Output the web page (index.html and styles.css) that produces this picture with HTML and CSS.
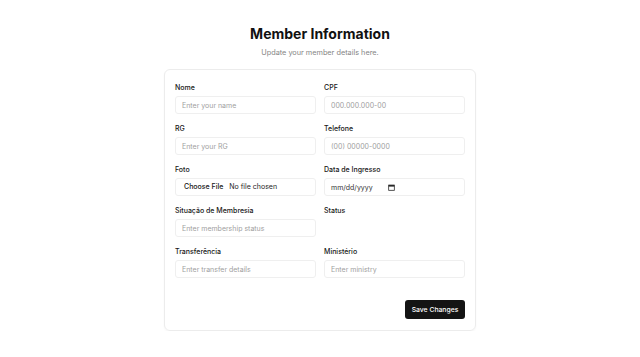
FILE: index.html
```html
<!DOCTYPE html>
<html lang="en">
<head>
<meta charset="utf-8">
<title>Member Information</title>
<link rel="stylesheet" href="styles.css">
</head>
<body>
<main class="page">
  <header class="head">
    <h1 class="title">Member Information</h1>
    <p class="subtitle">Update your member details here.</p>
  </header>
  <form class="card">
    <div class="grid">
      <div class="field">
        <label class="label">Nome</label>
        <input class="input" type="text" placeholder="Enter your name">
      </div>
      <div class="field">
        <label class="label">CPF</label>
        <input class="input" type="text" placeholder="000.000.000-00">
      </div>
      <div class="field">
        <label class="label">RG</label>
        <input class="input" type="text" placeholder="Enter your RG">
      </div>
      <div class="field">
        <label class="label">Telefone</label>
        <input class="input" type="text" placeholder="(00) 00000-0000">
      </div>
      <div class="field">
        <label class="label">Foto</label>
        <input class="input file" type="file">
      </div>
      <div class="field">
        <label class="label">Data de Ingresso</label>
        <div class="input date">
          <span class="date-text">mm/dd/yyyy</span>
          <svg class="cal" viewBox="0 0 10 10" width="7" height="7" aria-hidden="true">
            <rect x="1" y="1.5" width="8" height="7.5" fill="none" stroke="#222" stroke-width="1.1"/>
            <rect x="1" y="1.5" width="8" height="2.2" fill="#222"/>
          </svg>
        </div>
      </div>
      <div class="field">
        <label class="label">Situação de Membresia</label>
        <input class="input" type="text" placeholder="Enter membership status">
      </div>
      <div class="field">
        <label class="label">Status</label>
      </div>
      <div class="field">
        <label class="label">Transferência</label>
        <input class="input" type="text" placeholder="Enter transfer details">
      </div>
      <div class="field">
        <label class="label">Ministério</label>
        <input class="input" type="text" placeholder="Enter ministry">
      </div>
    </div>
    <div class="actions">
      <button class="btn" type="button">Save Changes</button>
    </div>
  </form>
</main>
</body>
</html>
```
FILE: styles.css
```css
* { box-sizing: border-box; }
html, body { margin: 0; padding: 0; background: #ffffff; }
body {
  font-family: Inter, "Noto Sans", "Liberation Sans", sans-serif;
  color: #0a0a0a;
}
.page {
  width: 312px;
  margin: 0 auto;
  padding-top: 24px;
}
.head { text-align: center; }
.title {
  margin: 0;
  font-size: 14px;
  line-height: 20px;
  font-weight: 700;
  color: #111;
}
.subtitle {
  margin: 3px 0 0;
  font-size: 7.3px;
  line-height: 12px;
  color: #858585;
}
.card {
  margin-top: 10px;
  border: 1px solid #ececec;
  border-radius: 6px;
  box-shadow: 0 1px 2px rgba(0,0,0,0.04);
  padding: 13px 10px 11px;
}
.grid {
  display: grid;
  grid-template-columns: 1fr 1fr;
  column-gap: 8px;
  row-gap: 10px;
}
.field {
  display: flex;
  flex-direction: column;
  gap: 4px;
}
.label {
  font-size: 7px;
  line-height: 9px;
  font-weight: 500;
  color: #171717;
}
.input {
  height: 18px;
  width: 100%;
  border: 1px solid #efefef;
  border-radius: 3px;
  padding: 0 6px;
  font-family: inherit;
  font-size: 7px;
  color: #404040;
  background: #fff;
  outline: none;
}
.input::placeholder { color: #a0a0a0; }
.file { padding: 0 4px; line-height: 16px; color: #262626; }
.file::file-selector-button {
  border: 0;
  background: transparent;
  font-family: inherit;
  font-size: 7px;
  font-weight: 500;
  color: #171717;
  padding: 0 4px;
  margin-right: 2px;
}
.date {
  display: flex;
  align-items: center;
  gap: 15px;
  color: #333;
}
.cal { display: block; }
.actions {
  display: flex;
  justify-content: flex-end;
  margin-top: 22px;
}
.btn {
  height: 19px;
  width: 60px;
  border: 0;
  border-radius: 3px;
  background: #141414;
  color: #fff;
  font-family: inherit;
  font-size: 6.8px;
  font-weight: 500;
  padding: 0;
}
```
